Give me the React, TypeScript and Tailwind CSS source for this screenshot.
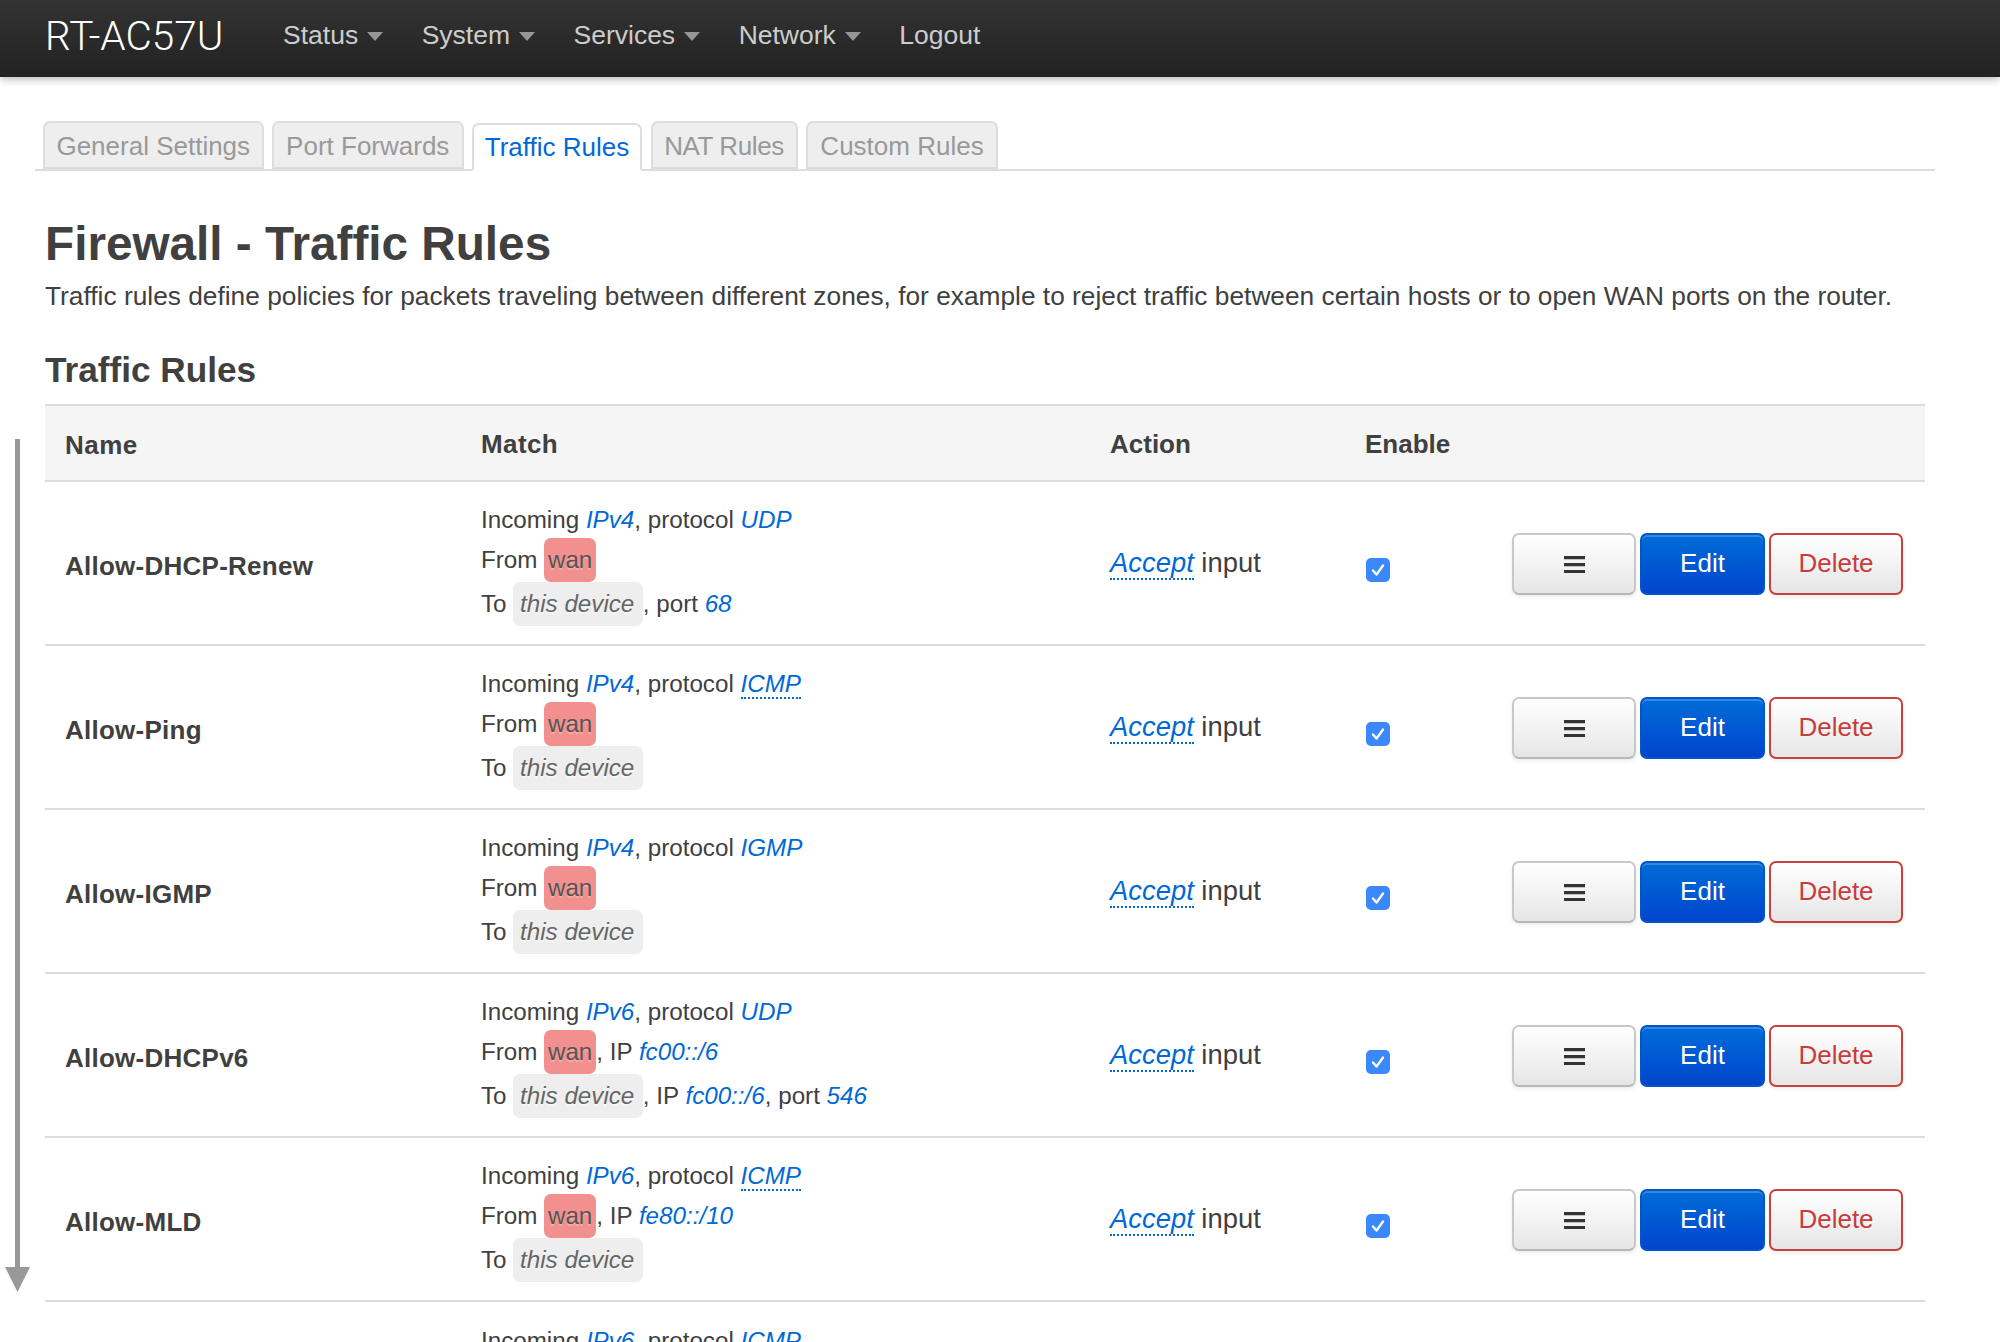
import React from "react";

const Link = ({ children, dotted }: { children: React.ReactNode; dotted?: boolean }) => (
  <span className={"italic text-[#0069d6] " + (dotted ? "border-b-2 border-dotted border-[#0069d6]" : "")}>{children}</span>
);

const Caret = () => (
  <svg width="16" height="9" viewBox="0 0 16 9" className="ml-[9px]">
    <path d="M0 0H16L8 9Z" fill="#969696" />
  </svg>
);

const Check = () => (
  <div className="ml-[1px] flex h-6 w-6 items-center justify-center rounded-[5px] bg-[#3b88fd]">
    <svg width="16" height="16" viewBox="0 0 16 16">
      <path d="M3 8.5L6.5 12.5L13 3.5" fill="none" stroke="#fff" strokeWidth="2.4" strokeLinecap="round" strokeLinejoin="round" />
    </svg>
  </div>
);

const Wan = () => (
  <span className="inline-block h-[44px] rounded-[7px] bg-[#f28f8f] pl-[3.5px] pr-[4px] align-top leading-[44px] text-[#555] [text-shadow:0_2px_0_rgba(255,255,255,0.25)]">wan</span>
);
const Device = () => (
  <span className="inline-block h-[44px] rounded-[7px] bg-[#eeeeee] pl-[7px] pr-[8.5px] align-top italic leading-[44px] text-[#666] [text-shadow:0_2px_0_rgba(255,255,255,0.5)]">this device</span>
);

type Rule = {
  name: string;
  ip: string;
  proto: string;
  from?: string;
  to?: string;
  port?: string;
};

const rules: Rule[] = [
  { name: "Allow-DHCP-Renew", ip: "IPv4", proto: "UDP", port: "68" },
  { name: "Allow-Ping", ip: "IPv4", proto: "ICMP" },
  { name: "Allow-IGMP", ip: "IPv4", proto: "IGMP" },
  { name: "Allow-DHCPv6", ip: "IPv6", proto: "UDP", from: "fc00::/6", to: "fc00::/6", port: "546" },
  { name: "Allow-MLD", ip: "IPv6", proto: "ICMP", from: "fe80::/10" },
];

const Row = ({ r }: { r: Rule }) => (
  <div className="grid h-[164px] grid-cols-[436px_629px_255px_147px_1fr] items-center border-b-2 border-[#dddddd]">
    <div className="pl-5 pt-[6px] text-[26px] font-bold tracking-[0.25px] text-[#404040]">{r.name}</div>
    <div className="text-[24.2px] text-[#404040]">
      <div className="h-[37px] leading-[37px]">
        Incoming <Link>{r.ip}</Link>, protocol <Link dotted={r.proto === "ICMP"}>{r.proto}</Link>
      </div>
      <div className="h-[44px] leading-[44px]">
        <span className="mr-[7px]">From</span>
        <Wan />
        {r.from ? <>, IP <Link>{r.from}</Link></> : null}
      </div>
      <div className="h-[44px] leading-[44px]">
        <span className="mr-[6.5px]">To</span>
        <Device />
        {r.to ? <>, IP <Link>{r.to}</Link></> : null}
        {r.port ? <>, port <Link>{r.port}</Link></> : null}
      </div>
    </div>
    <div className="text-[27.4px] text-[#404040]">
      <Link dotted>Accept</Link> input
    </div>
    <div className="pt-[13px]"><Check /></div>
    <div className="flex gap-1 pt-[2px]">
      <button className="flex h-[62px] w-[124px] items-center justify-center rounded-[7px] border-2 border-[#c8c8c8] border-b-[#b8b8b8] bg-gradient-to-b from-white to-[#e6e6e6] shadow-[0_2px_4px_rgba(0,0,0,0.08)]">
        <svg width="21" height="17" viewBox="0 0 21 17">
          <path d="M0 0H21V3.2H0ZM0 7H21V10.2H0ZM0 14H21V17H0Z" fill="#333" />
        </svg>
      </button>
      <button className="h-[62px] w-[125px] rounded-[7px] border-2 border-[#0055cc] bg-gradient-to-b from-[#006cd9] to-[#0044cc] pb-[2px] text-[26px] text-white shadow-[inset_0_2px_0_rgba(255,255,255,0.2)]">Edit</button>
      <button className="h-[62px] w-[134px] rounded-[7px] border-2 border-[#c9403f] bg-gradient-to-b from-white to-[#e6e6e6] pb-[1px] text-[26px] text-[#c83c3c] shadow-[0_2px_4px_rgba(0,0,0,0.08)]">Delete</button>
    </div>
  </div>
);

const Tab = ({ label, active, width, tight }: { label: string; active?: boolean; width: string; tight?: boolean }) => (
  <div
    className={
      "flex h-[48px] items-center justify-center rounded-t-[7px] border-2 pt-[2px] text-[26px] " + width + " " +
      (tight ? "tracking-[-0.4px] " : "") +
      (active
        ? "relative top-[2px] border-[#dddddd] border-b-white bg-white text-[#0069d6]"
        : "border-[#dddddd] bg-[#eeeeee] text-[#999]")
    }
  >
    <span className={active ? "-mt-[2px]" : ""}>{label}</span>
  </div>
);

export default function App() {
  return (
    <div className="relative h-[1342px] w-[2000px] overflow-hidden bg-white font-['Liberation_Sans',Arial,sans-serif]">
      <header className="flex h-[77px] items-center bg-gradient-to-b from-[#333333] to-[#222222] pb-[5px] pl-[45px] shadow-[0_2px_8px_rgba(0,0,0,0.3)]">
        <div className="mr-[60px] w-[178px] whitespace-nowrap font-['Roboto',sans-serif] text-[40.5px] font-light leading-none text-white">RT-AC57U</div>
        <nav className="flex items-center gap-[38.5px] text-[26.5px] text-[#cccccc]">
          {["Status", "System", "Services", "Network"].map((n) => (
            <div key={n} className="flex items-center">{n}<Caret /></div>
          ))}
          <div>Logout</div>
        </nav>
      </header>

      <div className="mx-[35px] mt-[44px] flex w-[1900px] gap-[8.5px] border-b-2 border-[#dddddd] pl-[8px]">
        <Tab label="General Settings" width="w-[220.5px]" />
        <Tab label="Port Forwards" width="w-[191.5px]" />
        <Tab label="Traffic Rules" width="w-[170px]" active />
        <Tab label="NAT Rules" width="w-[147px]" tight />
        <Tab label="Custom Rules" width="w-[192px]" />
      </div>

      <main className="ml-[45px] w-[1880px]">
        <h1 className="mt-[43px] text-[47.7px] font-bold leading-[60px] text-[#404040]">Firewall - Traffic Rules</h1>
        <p className="mt-[4px] whitespace-nowrap text-[26.3px] leading-[36px] text-[#404040]">
          Traffic rules define policies for packets traveling between different zones, for example to reject traffic between certain hosts or to open WAN ports on the router.
        </p>
        <h3 className="mt-[34px] text-[35.2px] font-bold leading-[44px] text-[#404040]">Traffic Rules</h3>

        <section className="mt-[12px]">
          <div className="grid h-[78px] grid-cols-[436px_629px_255px_147px_1fr] items-center border-y-2 border-[#dddddd] bg-[#f5f5f5] pt-[2px] text-[26px] font-bold text-[#404040]">
            <div className="pl-5 pt-[3px] tracking-[0.5px]">Name</div>
            <div className="tracking-[0.4px]">Match</div>
            <div>Action</div>
            <div>Enable</div>
            <div />
          </div>
          {rules.map((r) => <Row key={r.name} r={r} />)}
          <div className="pl-[436px] pt-[20px] text-[24.2px] leading-[37px] text-[#404040]">
            Incoming <Link>IPv6</Link>, protocol <Link dotted>ICMP</Link>
          </div>
        </section>
      </main>

      <svg className="absolute left-[5px] top-[439px]" width="25" height="854" viewBox="0 0 25 854">
        <rect x="10" y="0" width="5" height="830" fill="#999" />
        <path d="M0 828H25L12.5 853Z" fill="#999" />
      </svg>
    </div>
  );
}
